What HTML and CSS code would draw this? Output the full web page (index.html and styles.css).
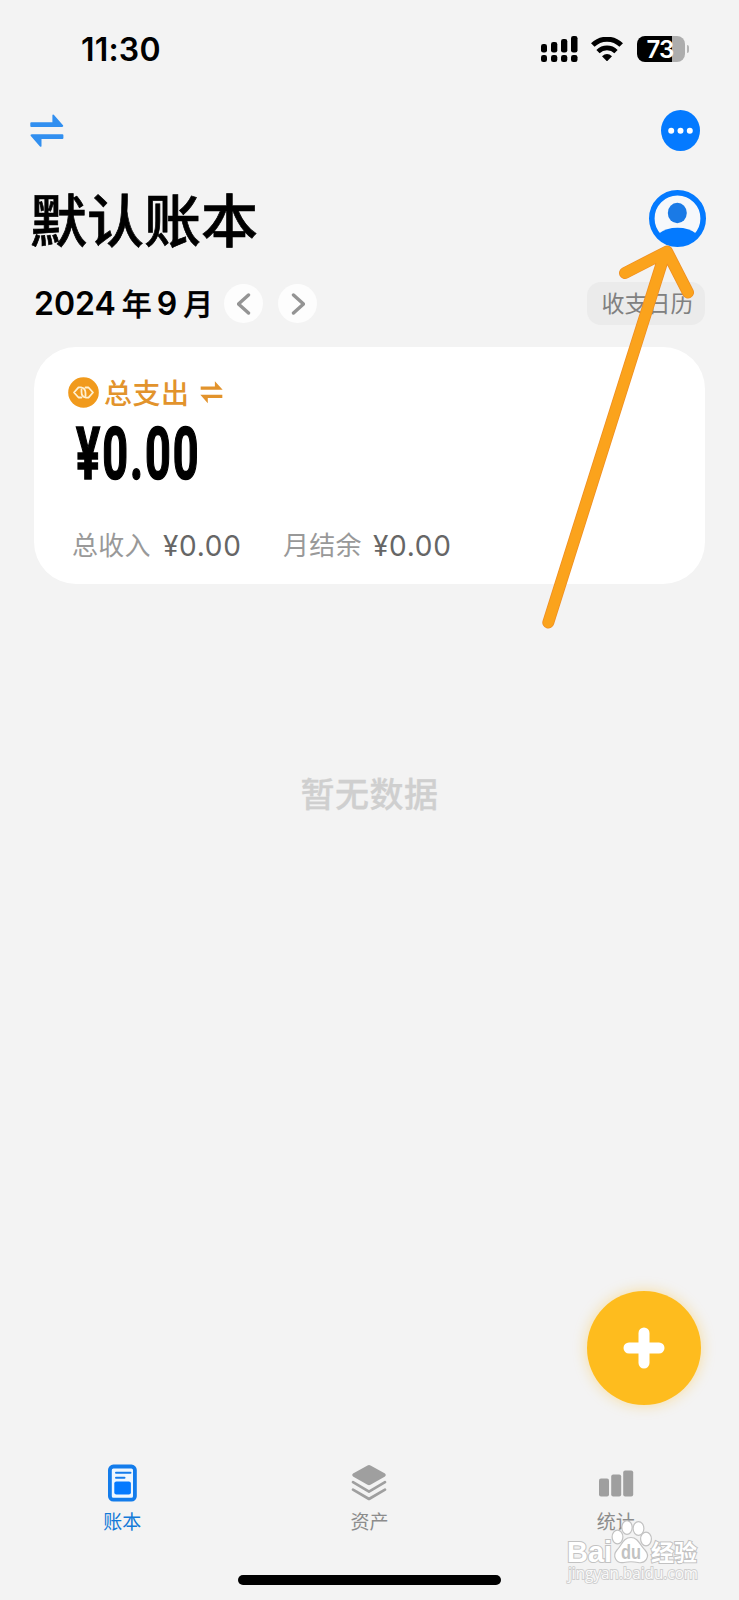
FILE: index.html
```html
<!DOCTYPE html>
<html lang="zh-CN">
<head>
<meta charset="utf-8">
<title>默认账本</title>
<link rel="stylesheet" href="styles.css">
</head>
<body>
<div class="screen">
  <header class="status">
    <span class="time">11:30</span>
    <div class="indicators">
      <svg class="signal" width="38" height="28" viewBox="0 0 38 28">
        <rect x="1" y="9" width="6" height="8.5" rx="2.3"/><rect x="11" y="7" width="6.3" height="10.5" rx="2.3"/><rect x="21" y="4" width="6.3" height="13.5" rx="2.3"/><rect x="31" y="1" width="6.5" height="16.5" rx="2.3"/>
        <rect x="1" y="20" width="6" height="7" rx="2.3"/><rect x="11" y="20" width="6.3" height="7" rx="2.3"/><rect x="21" y="20" width="6.3" height="7" rx="2.3"/><rect x="31" y="20" width="6.5" height="7" rx="2.3"/>
      </svg>
      <svg class="wifi" width="32" height="25" viewBox="0 0 32 25">
        <path d="M1.8 8.1A20 20 0 0 1 30.2 8.1" fill="none" stroke="#000" stroke-width="5"/>
        <path d="M7 14.6A12.8 12.8 0 0 1 25 14.6" fill="none" stroke="#000" stroke-width="4.6"/>
        <path d="M11 19.2Q16 15 21 19.2L16.6 23.8Q16 24.4 15.4 23.8Z"/>
      </svg>
      <div class="battery"><span class="cell">73</span><i class="nub"></i></div>
    </div>
  </header>

  <nav class="toolbar">
    <svg width="34" height="34" viewBox="0 0 34 34" fill="#318ff0">
      <path d="M1.2 8.3H22.4V1.2Q22.6 0 23.8 .8L33.2 11.5Q33.6 12.8 32 13H1.2Q.3 13 .3 12V9.3Q.3 8.3 1.2 8.3Z"/>
      <path d="M32.4 25H11.5V32Q11.2 33.4 10 32.5L.6 21.8Q0 20.5 1.8 20.3H32.4Q33.4 20.3 33.4 21.3V24Q33.4 25 32.4 25Z"/>
    </svg>
    <svg width="39" height="41" viewBox="0 0 39 41">
      <ellipse cx="19.5" cy="20.5" rx="19.5" ry="20.5" fill="#047aff"/>
      <circle cx="10.2" cy="20.8" r="3" fill="#fff"/><circle cx="19.5" cy="20.8" r="3" fill="#fff"/><circle cx="28.8" cy="20.8" r="3" fill="#fff"/>
    </svg>
  </nav>

  <section class="heading">
    <h1>默认账本</h1>
    <svg width="57" height="57" viewBox="0 0 57 57">
      <circle cx="28.5" cy="28.5" r="25.7" fill="#f6f8fb" stroke="#047aff" stroke-width="5.6"/>
      <ellipse cx="28.3" cy="23" rx="9.5" ry="10.2" fill="#1a7ae6"/>
      <path d="M10 43.5Q17 37.8 28.5 37.8T47 43.5Q40 54 28.5 54T10 43.5Z" fill="#047aff"/>
    </svg>
  </section>

  <section class="period">
    <div class="month"><span>2024</span><b>年</b><span>9</span><b>月</b></div>
    <span class="step"><svg width="14" height="22" viewBox="0 0 14 22"><path d="M11.5 2L1.5 11L11.5 20"/></svg></span>
    <span class="step"><svg width="14" height="22" viewBox="0 0 14 22"><path d="M2.5 2L12.5 11L2.5 20"/></svg></span>
    <span class="calendar">收支日历</span>
  </section>

  <section class="card">
    <div class="kind">
      <svg width="31" height="31" viewBox="0 0 31 31">
        <circle cx="15.5" cy="15.5" r="15.3" fill="#f19a1c"/>
        <g fill="none" stroke="#fff0d0" stroke-width="1.8" stroke-linejoin="round" stroke-linecap="round">
          <path d="M13.5 20.5H10.5L6 15.5L10.5 10.3H13Q17.5 11 17.5 16V19"/>
          <path d="M17.5 10.5H20.5L25 15.5L20.5 20.7H18Q13.500 20 13.500 15V12.500"/>
        </g>
      </svg>
      <span>总支出</span>
      <svg class="swap" width="23" height="23" viewBox="0 0 34 34" fill="#e2932c">
        <path d="M1 8H22V.5L33.5 13H1Z"/><path d="M33 25H11.5V33L.5 20.3H33Z"/>
      </svg>
    </div>
    <div class="total"><span>¥0.00</span></div>
    <div class="sums">
      <span class="label">总收入</span><span class="amount">¥0.00</span>
      <span class="label second">月结余</span><span class="amount">¥0.00</span>
    </div>
  </section>

  <main class="empty">暂无数据</main>

  <div class="actions">
    <span class="add"><svg width="42" height="42" viewBox="0 0 42 42"><path d="M21 6V36M6 21H36" stroke="#fff" stroke-width="11" stroke-linecap="round"/></svg></span>
  </div>

  <footer class="tabs">
    <div class="tab active">
      <svg width="36" height="38" viewBox="0 0 36 38">
        <rect x="5.9" y="2.5" width="25" height="33.2" rx="3.5" fill="#eef7ff" stroke="#137ceb" stroke-width="3.8"/>
        <path d="M12 8.7H26.5M12 13.7H20.5" stroke="#137ceb" stroke-width="2" stroke-linecap="round"/>
        <rect x="10.3" y="17.5" width="16.6" height="13" rx="2" fill="#047aff"/>
      </svg>
      <span>账本</span>
    </div>
    <div class="tab">
      <svg width="36" height="38" viewBox="0 0 36 38" fill="#9f9f9f">
        <path d="M16.5 1.4Q18 .6 19.5 1.4L34 9.6Q35.8 11 34 12.4L19.5 20.8Q18 21.6 16.5 20.8L2 12.4Q.2 11 2 9.6Z"/>
        <path d="M2 18.2L18 27.6L34 18.2M2 25.6L18 35L34 25.6" fill="none" stroke="#9f9f9f" stroke-width="2.7" stroke-linecap="round" stroke-linejoin="round"/>
      </svg>
      <span>资产</span>
    </div>
    <div class="tab">
      <svg width="36" height="38" viewBox="0 0 36 38" fill="#9f9f9f">
        <rect x="1" y="14.5" width="10" height="18" rx="2"/><rect x="13.2" y="10.5" width="10" height="22" rx="2"/><rect x="25.2" y="6.5" width="10" height="26" rx="2"/>
      </svg>
      <span>统计</span>
    </div>
  </footer>
  <div class="home"></div>

  <svg class="overlay" width="739" height="1600" viewBox="0 0 739 1600">
    <g fill="none" stroke-linecap="round" stroke-linejoin="round">
      <path d="M548.3 622.5L665 253M625 273L667 251.5L688 292.5" stroke="#ef8f22" stroke-width="12"/>
      <path d="M548.3 622.5L665 253M625 273L667 251.5L688 292.5" stroke="#fba31c" stroke-width="10.4"/>
    </g>
    <g class="mark">
      <text class="brand" x="567" y="1561.5" textLength="45" lengthAdjust="spacingAndGlyphs">Bai</text>
      <ellipse cx="617.5" cy="1537" rx="5.4" ry="6.8"/><ellipse cx="627" cy="1527.5" rx="5.2" ry="6.8"/><ellipse cx="638.5" cy="1528.5" rx="5.4" ry="6.8"/><ellipse cx="646" cy="1539" rx="5.4" ry="6.8"/>
      <path d="M631 1537.5C638 1537.500 640 1545 645 1550C651 1557 645 1564 638 1562.500Q631 1561 624 1562.500C616 1564 612 1556 617 1550C622 1545 623 1537.500 631 1537.500Z"/>
      <text class="du" x="621" y="1558.500" textLength="20" lengthAdjust="spacingAndGlyphs">du</text>
      <text class="brand cjk" x="651" y="1560.5" textLength="46" lengthAdjust="spacingAndGlyphs">经验</text>
      <text class="site" x="568" y="1579" textLength="130" lengthAdjust="spacingAndGlyphs">jingyan.baidu.com</text>
    </g>
  </svg>
</div>
</body>
</html>
```
FILE: styles.css
```css
* { box-sizing: border-box; }
body { margin: 0; background: #f3f3f3; }
svg { display: block; flex: none; }
.screen {
  position: relative;
  display: flex;
  flex-direction: column;
  width: 739px;
  height: 1600px;
  overflow: hidden;
  background: #f3f3f3;
  color: #000;
  font-family: Inter, "Noto Sans CJK SC", sans-serif;
}
.status {
  display: flex;
  align-items: center;
  justify-content: space-between;
  height: 98px;
  padding: 0 50px 0 81px;
}
.time { margin-top: 2px; font-size: 32px; font-weight: 600; letter-spacing: 0.2px; line-height: 1; }
.indicators { display: flex; align-items: center; }
.wifi { margin: 0 14px 0 13px; }
.battery { display: flex; align-items: center; gap: 2px; }
.cell {
  width: 48px;
  height: 26px;
  padding-right: 2px;
  border-radius: 8px;
  background: linear-gradient(90deg, #000 35px, #adadad 35px);
  color: #fff;
  font-size: 24px;
  font-weight: 600;
  line-height: 27px;
  text-align: center;
  letter-spacing: -0.8px;
}
.nub { width: 2px; height: 8px; border-radius: 0 2px 2px 0; background: #b5b5b5; }
.toolbar {
  display: flex;
  align-items: center;
  justify-content: space-between;
  height: 65px;
  padding: 0 39px 0 30px;
}
.heading {
  display: flex;
  align-items: center;
  justify-content: space-between;
  height: 111px;
  padding: 0 33px 0 30px;
}
h1 { margin: 6px 0 0; font-size: 57px; font-weight: 500; line-height: 1; -webkit-text-stroke: 0.7px #000; }
.period {
  display: flex;
  align-items: center;
  height: 59px;
  padding: 0 34px 0 34px;
}
.month { display: flex; align-items: center; width: 190px; font-size: 32px; font-weight: 600; line-height: 1; }
.month b { margin: 0 5px 0 6px; font-size: 30px; font-weight: 500; -webkit-text-stroke: 0.4px #000; }
.step {
  display: flex;
  align-items: center;
  justify-content: center;
  width: 39px;
  height: 39px;
  margin-right: 15px;
  border-radius: 50%;
  background: #fdfdfd;
}
.step path { fill: none; stroke: #949494; stroke-width: 3.4; stroke-linecap: round; stroke-linejoin: round; }
.calendar {
  width: 118px;
  height: 43px;
  margin-left: auto;
  padding-left: 3px;
  border-radius: 14px;
  background: #ebebeb;
  color: #808080;
  font-size: 23px;
  line-height: 45px;
  text-align: center;
}
.card {
  height: 237px;
  margin: 14px 34px 0;
  padding: 30px 34px 0;
  border-radius: 42px;
  background: #fff;
}
.kind { display: flex; align-items: center; height: 31px; color: #e2932c; font-size: 28px; font-weight: 500; }
.kind span { width: 86px; margin: 2px 10px 0 5px; letter-spacing: 0.5px; line-height: 1; white-space: nowrap; }
.total { height: 74px; margin-top: 9px; padding-left: 8px; }
.total span {
  display: inline-block;
  font-family: Roboto, sans-serif;
  font-size: 72px;
  font-weight: 700;
  line-height: 76px;
  letter-spacing: 3.2px;
  -webkit-text-stroke: 1.6px #000;
  transform: scaleX(0.625);
  transform-origin: left;
}
.sums { display: flex; align-items: center; height: 30px; margin-top: 40px; padding-left: 4px; }
.label { width: 79px; color: #999; font-size: 26px; letter-spacing: 0.3px; line-height: 1; white-space: nowrap; }
.second { margin-left: 42px; }
.amount { width: 78px; margin-left: 12px; color: #666; font-size: 28px; letter-spacing: 0.7px; line-height: 1; }
.second + .amount { margin-left: 11px; }
.empty {
  margin-top: 194px;
  color: #cfcfcf;
  font-size: 34px;
  font-weight: 500;
  line-height: 34px;
  letter-spacing: 0.5px;
  text-align: center;
  -webkit-text-stroke: 0.3px #cfcfcf;
}
.actions { display: flex; justify-content: flex-end; margin-top: 479px; padding-right: 38px; }
.add {
  display: flex;
  align-items: center;
  justify-content: center;
  width: 114px;
  height: 114px;
  border-radius: 50%;
  background: #febc1e;
  box-shadow: 0 0 14px rgba(254, 188, 30, 0.4);
}
.tabs { display: grid; grid-template-columns: repeat(3, 1fr); margin-top: 59px; }
.tab { display: flex; flex-direction: column; align-items: center; gap: 11px; color: #8c8c8c; font-size: 19px; line-height: 19px; }
.active { padding-right: 2px; color: #137ad8; }
.home { width: 263px; height: 10px; margin: auto auto 15px 238px; border-radius: 5px; background: #000; }
.overlay { position: absolute; inset: 0; pointer-events: none; }
.mark { fill: #fff; stroke: #c2c2c2; stroke-width: 1.2; font-family: "Liberation Sans", "Noto Sans CJK SC", sans-serif; }
.brand { font-size: 29px; font-weight: 700; stroke-width: 2; paint-order: stroke; }
.cjk { font-size: 23px; }
.du { fill: #c2c2c2; stroke: none; font-size: 20px; font-weight: 600; }
.site { font-family: "Open Sans", sans-serif; font-size: 16px; fill: #fafafa; stroke: #cecece; stroke-width: 1.8; paint-order: stroke; }
```
